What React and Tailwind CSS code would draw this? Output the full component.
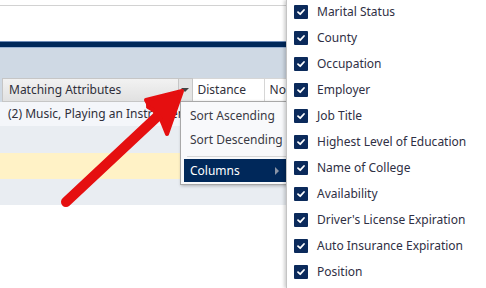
import React from 'react';

const COLUMNS = [
  'Marital Status',
  'County',
  'Occupation',
  'Employer',
  'Job Title',
  'Highest Level of Education',
  'Name of College',
  'Availability',
  "Driver's License Expiration",
  'Auto Insurance Expiration',
  'Position',
];

const font = { fontFamily: '"Noto Sans", "Open Sans", sans-serif' };

function Check() {
  return (
    <span className="flex items-center justify-center w-[14px] h-[14px] bg-[#0b2a5b] rounded-[1px]">
      <svg width="10" height="10" viewBox="0 0 10 10">
        <path d="M2 5.2 L4.2 7.2 L8 3" fill="none" stroke="#fff" strokeWidth="1.8" strokeLinecap="round" strokeLinejoin="round" />
      </svg>
    </span>
  );
}

export default function App() {
  return (
    <div className="relative flex w-[486px] h-[288px] overflow-hidden bg-white text-[#2f2f3a]" style={font}>
      {/* grid side */}
      <div className="w-[286px] shrink-0 flex flex-col">
        <div className="h-[5px]" />
        <div className="h-px bg-[#d2d2d2]" />
        <div className="h-[35px]" />
        <div className="h-px bg-[#6f8cb8]" />
        <div className="h-[5px] bg-[#00285a]" />
        <div className="h-px bg-[#9cb2d2]" />
        <div className="h-[30px] bg-[#cfd9e4]" />

        {/* header */}
        <div className="flex h-[24px] bg-[#cfd9e4] text-[12px]">
          <div className="ml-[2px] flex items-center w-[179px] pl-[6px] border border-[#c6c6c6] bg-gradient-to-b from-[#f2f2f2] to-[#e1e1e1]">
            Matching Attributes
          </div>
          <div className="flex items-center justify-center w-[14px] border-y border-r border-[#c6c6c6] bg-[#e4e4e4]">
            <span className="w-0 h-0 border-l-[4px] border-r-[4px] border-t-[4px] border-l-transparent border-r-transparent border-t-[#444]" />
          </div>
          <div className="flex items-center w-[73px] pl-[5px] border-y border-r border-[#d6d6d6] bg-white">
            Distance
          </div>
          <div className="flex items-center flex-1 pl-[5px] border-y border-[#d6d6d6] bg-white">
            No
          </div>
        </div>

        {/* rows */}
        <div className="h-[24px] flex items-center pl-[8px] bg-[#f4f6fa] text-[12px] whitespace-nowrap overflow-hidden">
          (2) Music, Playing an Instrument
        </div>
        <div className="h-[27px] bg-[#e9edf2]" />
        <div className="h-[26px] bg-[#fff2c6]" />
        <div className="h-[26px] bg-[#e9edf2]" />
        <div className="flex-1 bg-white" />
      </div>

      {/* column menu */}
      <div className="absolute left-[180px] top-[101px] w-[116px] h-[84px] bg-[#f8f9fb] border border-[#a8a8a8] shadow-[1px_1px_3px_rgba(0,0,0,0.25)] text-[12px] text-[#3a3a44] z-10">
        <div className="h-[24px] flex items-center pl-[9px] mt-[2px]">Sort Ascending</div>
        <div className="h-[24px] flex items-center pl-[9px]">Sort Descending</div>
        <div className="mx-[6px] mt-[4px] h-px bg-[#d8d8d8]" />
        <div className="ml-[3px] mt-[2px] h-[23px] flex items-center justify-between pl-[6px] pr-[16px] bg-[#00285a] text-white">
          <span>Columns</span>
          <span className="w-0 h-0 border-t-[4px] border-b-[4px] border-l-[4px] border-t-transparent border-b-transparent border-l-[#8a94a6]" />
        </div>
      </div>

      {/* columns submenu */}
      <div className="relative z-20 flex-1 bg-white border-l border-[#c4c4c4] shadow-[-2px_0_3px_rgba(0,0,0,0.18)]">
        <ul className="-mt-px">
          {COLUMNS.map((c) => (
            <li key={c} className="h-[26px] flex items-center gap-[9px] pl-[7px] text-[12px] text-[#2f2f44] whitespace-nowrap">
              <Check />
              <span>{c}</span>
            </li>
          ))}
        </ul>
      </div>

      {/* red arrow */}
      <svg className="absolute left-0 top-0 z-30 pointer-events-none" width="486" height="288">
        <line x1="66" y1="202" x2="160" y2="114" stroke="#e50f10" strokeWidth="10" strokeLinecap="round" />
        <path d="M182 91 L146 100 Q149 104 148 107 Q156 111 160 117 Q163 124 167 134 Z" fill="#e50f10" stroke="#e50f10" strokeWidth="4" strokeLinejoin="round" />
      </svg>
    </div>
  );
}
